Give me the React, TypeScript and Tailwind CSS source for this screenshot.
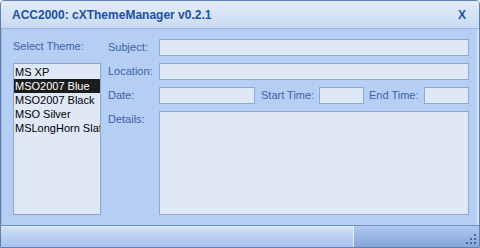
import React from 'react';

const themes = ['MS XP', 'MSO2007 Blue', 'MSO2007 Black', 'MSO Silver', 'MSLongHorn Slate'];

const Field = ({ className = '' }: { className?: string }) => (
    <div className={`h-[17px] bg-[#dfe9f6] border border-[#8fa9d0] ${className}`} />
);

const Label = ({ children, className = '' }: { children: React.ReactNode; className?: string }) => (
    <span className={`text-[11px] leading-[13px] text-[#3d62a8] whitespace-nowrap ${className}`}>{children}</span>
);

const App = () => {
    const selected = 1;

    return (
        <div className="w-[480px] h-[248px] flex flex-col bg-[#b4cff3] border border-[#5f7fb3] rounded-t-[4px] overflow-hidden" style={{ fontFamily: 'Tahoma, "Liberation Sans", Arial, sans-serif' }}>
            {/* title bar */}
            <div className="h-[28px] shrink-0 flex items-center justify-between pl-[11px] pr-[13px] bg-gradient-to-b from-[#e4edf9] to-[#c8daf2] border-b border-[#9ab4da]">
                <span className="text-[12px] font-bold text-[#2150a3]">ACC2000: cXThemeManager v0.2.1</span>
                <span className="text-[12px] font-bold text-[#2150a3]">X</span>
            </div>

            {/* body */}
            <div className="flex-1 flex pl-[11px] pt-[10px] border-l border-[#9cb6dc] border-r-2 border-r-[#d3e2f6]">
                <div className="w-[88px] flex flex-col">
                    <Label className="mt-[1px]">Select Theme:</Label>
                    <div className="mt-[10px] h-[152px] bg-[#dfe9f6] border border-[#8ba5cc] pt-[1px] flex flex-col">
                        {themes.map((t, i) => (
                            <div key={t} className={`h-[14px] pl-[1px] text-[11px] leading-[14px] whitespace-nowrap overflow-hidden ${i === selected ? 'bg-[#1c1c1c] text-white' : 'text-black'}`}>
                                {t}
                            </div>
                        ))}
                    </div>
                </div>

                <div className="ml-[7px] w-[361px] flex flex-col gap-[7px]">
                    <div className="flex items-center">
                        <Label className="w-[51px]">Subject:</Label>
                        <Field className="flex-1" />
                    </div>
                    <div className="flex items-center">
                        <Label className="w-[51px]">Location:</Label>
                        <Field className="flex-1" />
                    </div>
                    <div className="flex items-center">
                        <Label className="w-[51px]">Date:</Label>
                        <Field className="w-[96px]" />
                        <Label className="ml-[6px] w-[58px]">Start Time:</Label>
                        <Field className="w-[45px]" />
                        <Label className="ml-[5px] w-[55px]">End Time:</Label>
                        <Field className="w-[45px]" />
                    </div>
                    <div className="flex">
                        <Label className="w-[51px] mt-[2px]">Details:</Label>
                        <div className="flex-1 h-[104px] bg-[#dfe9f6] border border-[#8fa9d0]" />
                    </div>
                </div>
            </div>

            {/* status bar */}
            <div className="h-[22px] shrink-0 flex border-t border-[#6f8dbd]">
                <div className="flex-1 bg-gradient-to-b from-[#d3e2f6] via-[#b9d0f0] to-[#aac4eb] border-t border-[#e3edfa]" />
                <div className="w-[126px] relative bg-gradient-to-b from-[#b0c9ec] to-[#84a5d8] border-l border-[#e6effb]">
                    <svg className="absolute right-[3px] bottom-[3px]" width="10" height="10" viewBox="0 0 10 10">
                        <g fill="#4a6797">
                            <rect x="8" y="0" width="2" height="2" />
                            <rect x="4" y="4" width="2" height="2" />
                            <rect x="8" y="4" width="2" height="2" />
                            <rect x="0" y="8" width="2" height="2" />
                            <rect x="4" y="8" width="2" height="2" />
                            <rect x="8" y="8" width="2" height="2" />
                        </g>
                    </svg>
                </div>
            </div>
        </div>
    );
};

export default App;
